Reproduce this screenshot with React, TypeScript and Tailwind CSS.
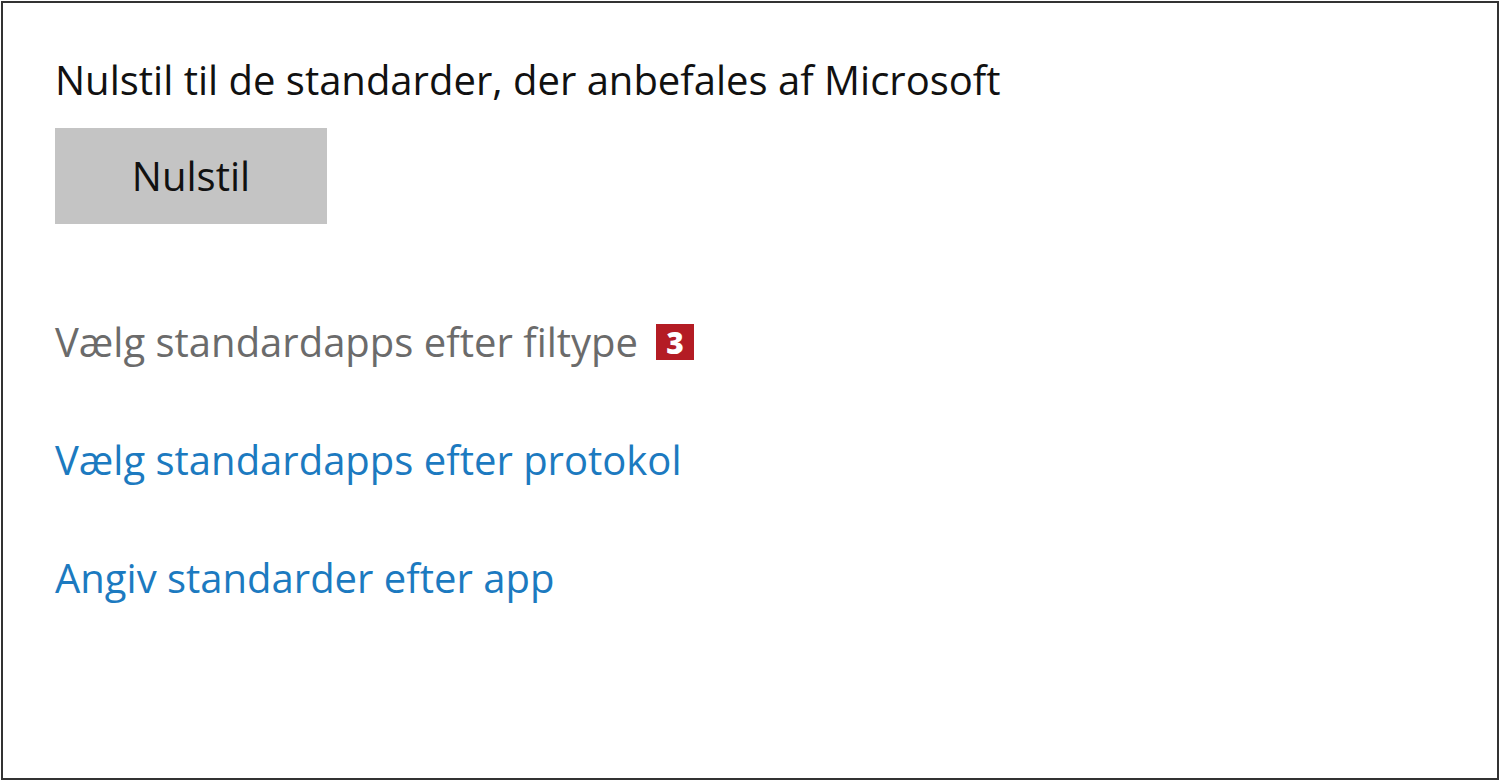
import React from 'react';

function App() {
  return (
    <div className="w-[1500px] h-[781px] bg-white p-px font-['Open_Sans',sans-serif]">
      <div className="w-full h-full border-2 border-[#333] flex flex-col pl-[52px] pt-[47px]">
        {/* reset */}
        <h1 className="text-[40px] leading-[60px] text-[#111]">
          Nulstil til de standarder, der anbefales af Microsoft
        </h1>
        <button className="mt-[18px] w-[272px] h-[96px] bg-[#c4c4c4] text-[40px] text-[#111]">
          Nulstil
        </button>
        {/* links */}
        <div className="mt-[88px] flex items-center gap-[18px]">
          <p className="text-[40px] leading-[60px] text-[#6b6b6b]">
            Vælg standardapps efter filtype
          </p>
          <span className="w-[38px] h-[36px] bg-[#b41c24] text-white font-extrabold text-[30px] flex items-center justify-center">
            3
          </span>
        </div>
        <a className="mt-[58px] text-[40px] leading-[60px] text-[#1c7ac0]">
          Vælg standardapps efter protokol
        </a>
        <a className="mt-[58px] text-[40px] leading-[60px] text-[#1c7ac0]">
          Angiv standarder efter app
        </a>
      </div>
    </div>
  );
}

export default App;
